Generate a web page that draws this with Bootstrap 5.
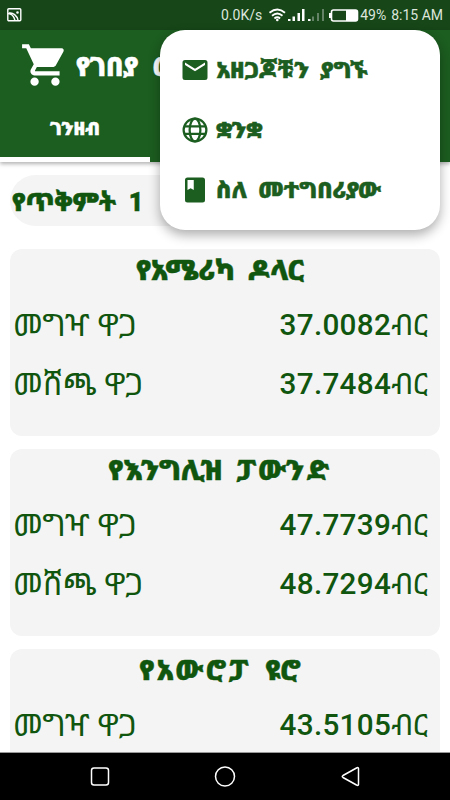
<!DOCTYPE html>
<html lang="am">
<head>
<meta charset="utf-8">
<meta name="viewport" content="width=device-width, initial-scale=1">
<title>የገበያ</title>
<link href="https://cdn.jsdelivr.net/npm/bootstrap@5.3.0/dist/css/bootstrap.min.css" rel="stylesheet">
<style>
:root{--green:#1c5d20;--ink:#10560f}
body{font-family:Roboto,"Noto Sans Ethiopic","Noto Sans","DejaVu Sans",sans-serif;background:#fff;color:var(--ink)}
.screen{width:450px;height:800px}
.status{height:30px;background:#174719;color:#dde5dd;font-size:14px;padding:0 7px;flex:none}
.clock{margin-left:5px}
.app-head{height:132px;background:var(--green);color:#fff;flex:none;box-shadow:0 2px 4px rgba(0,0,0,.3);z-index:1}
.title-bar{height:69px;padding-left:20px}
.heavy{font-weight:900;white-space:pre;line-height:1;-webkit-text-stroke:.5px currentColor}
.app-name{font-size:26px;margin-left:6px;padding-top:5px;word-spacing:8px}
.tab-on{width:150px;height:63px;border-bottom:5px solid #fff;font-size:18.5px;padding-top:3px}
.content{padding:13px 10px 0}
.day{height:51px;border-radius:26px;background:#f4f4f4;font-size:25.2px;padding:4px 0 0 2px;margin-bottom:23px;flex:none}
.rate{height:187px;border-radius:12px;background:#f4f4f4;margin-bottom:13px;flex:none}
.rate h2{font-size:28px;height:43px;margin:0 0 1px;padding-right:10px}
.wide{letter-spacing:2.6px}
.line{height:59px;padding:17px 12px 0 3px;line-height:1;font-size:30px}
.line > span:first-child{font-size:31.2px}
.num b{font-weight:500;letter-spacing:.3px}
.num{font-size:29.7px}
.navkeys{height:48px;background:#000;border-top:1px solid #999;flex:none;z-index:1}
.pop{left:160px;top:30px;width:280px;height:200px;border-radius:25px;background:#fff;box-shadow:0 5px 12px rgba(0,0,0,.32);z-index:2;padding:10px 0 10px 20px}
.pop a{height:60px;color:var(--green);font-size:22.9px;gap:6px}
.pop span{padding-top:3px}
</style>
</head>
<body>
<main class="screen position-relative overflow-hidden d-flex flex-column">
  <div class="status d-flex align-items-center justify-content-between">
    <svg width="15" height="14" viewBox="0 0 15 14" fill="none" stroke="#fff" stroke-width="1.4"><rect x=".8" y=".8" width="13" height="12" rx="1"/><path d="M1 5.500c4 0 6 3 7 7M2 5c4-1 8 3 9 7"/><circle cx="10.500" cy="4.500" r=".6"/></svg>
    <div class="d-flex align-items-center">
      <span>0.0K/s</span>
      <svg width="94" height="16" viewBox="0 0 94 16" class="ms-1" fill="#fff"><g fill="none" stroke="#fff" stroke-width="1.8"><path d="M3.500 5.800q8-6.500 15.500 0M6 8.800q5.300-4.500 10.500 0M8.400 11.500q3-2.400 5.700 0"/></g><circle cx="11.300" cy="13" r="1.300"/><path d="M22 12h2.500v2H22zM26.500 9.500H29V14h-2.500zM31.500 6H34v8h-2.500zM36 2h2.500v12H36zM42 12h2.500v2H42z"/><path fill="#648366" d="M46 9.500h2V14h-2zM51 6h2v8h-2zM56 2h2v12h-2z"/><path d="M63 6h2v5h-2z"/><rect x="65.500" y="3" width="26" height="11" rx="2" fill="none" stroke="#fff" stroke-width="1.600"/><path d="M80 3h11v11H80z"/></svg>
      <span>49%</span><span class="clock">8:15 AM</span>
    </div>
  </div>
  <header class="app-head">
    <div class="title-bar d-flex align-items-center">
      <svg width="50" height="50" viewBox="0 0 24 24" fill="#fff"><path d="M7 18a2 2 0 1 0 0 4 2 2 0 0 0 0-4zM1 2v2h2l3.600 7.590-1.350 2.450C4.520 15.370 5.480 17 7 17h12v-2H7.420a.25.25 0 0 1-.25-.25l.03-.12.900-1.630h7.450c.75 0 1.410-.41 1.750-1.030L20.880 5.480C21.250 4.820 20.770 4 20 4H5.210l-.94-2H1zm16 16a2 2 0 1 0 0 4 2 2 0 0 0 0-4z"/></svg>
      <span class="heavy app-name">የገበያ መረጃ</span>
    </div>
    <div class="tab-on heavy d-flex align-items-center justify-content-center">ገንዘብ</div>
  </header>
  <section class="content d-flex flex-column flex-grow-1 overflow-hidden">
    <div class="day heavy d-flex align-items-center">የጥቅምት  1</div>
    <article class="rate"><h2 class="heavy d-flex align-items-center justify-content-center">የአሜሪካ  ዶላር</h2>
      <div class="line d-flex justify-content-between"><span>መግዣ ዋጋ</span><span class="num"><b>37.0082</b>ብር</span></div>
      <div class="line d-flex justify-content-between"><span>መሸጫ ዋጋ</span><span class="num"><b>37.7484</b>ብር</span></div></article>
    <article class="rate"><h2 class="heavy d-flex align-items-center justify-content-center"><span>የእንግሊዝ  </span><span class="wide">ፓውንድ</span></h2>
      <div class="line d-flex justify-content-between"><span>መግዣ ዋጋ</span><span class="num"><b>47.7739</b>ብር</span></div>
      <div class="line d-flex justify-content-between"><span>መሸጫ ዋጋ</span><span class="num"><b>48.7294</b>ብር</span></div></article>
    <article class="rate"><h2 class="heavy d-flex align-items-center justify-content-center"><span class="wide">የአውሮፓ</span><span>  ዩሮ</span></h2>
      <div class="line d-flex justify-content-between"><span>መግዣ ዋጋ</span><span class="num"><b>43.5105</b>ብር</span></div></article>
  </section>
  <nav class="pop position-absolute">
    <a class="heavy d-flex align-items-center text-decoration-none"><svg width="30" height="30" viewBox="0 0 24 24" fill="currentColor"><path d="M20 4H4a2 2 0 0 0-2 2v12a2 2 0 0 0 2 2h16a2 2 0 0 0 2-2V6a2 2 0 0 0-2-2zm0 4-8 5-8-5V6l8 5 8-5v2z"/></svg><span>አዘጋጆቹን  ያግኙ</span></a>
    <a class="heavy d-flex align-items-center text-decoration-none"><svg width="30" height="30" viewBox="0 0 24 24" fill="none" stroke="currentColor" stroke-width="1.800"><circle cx="12" cy="12" r="9.100"/><ellipse cx="12" cy="12" rx="4.300" ry="9.100"/><path d="M3.500 9h17M3.500 15h17"/></svg><span>ቋንቋ</span></a>
    <a class="heavy d-flex align-items-center text-decoration-none"><svg width="30" height="30" viewBox="0 0 24 24" fill="currentColor"><path d="M18 2H6a2 2 0 0 0-2 2v16a2 2 0 0 0 2 2h12a2 2 0 0 0 2-2V4a2 2 0 0 0-2-2zM6 4h5v8l-2.500-1.500L6 12z"/></svg><span>ስለ  መተግበሪያው</span></a>
  </nav>
  <footer class="navkeys d-flex align-items-center justify-content-center">
    <svg width="300" height="24" viewBox="0 0 300 24" fill="none" stroke="#fff" stroke-width="1.500"><rect x="16.500" y="3" width="17" height="17" rx="2.500"/><circle cx="150" cy="11.500" r="9.500"/><path d="M283.500 3.500v16q0 1.500-2 .5l-13.500-7.500q-1.500-1 0-2l13.500-7.500q2-1 2 .5z"/></svg>
  </footer>
</main>
<script src="https://cdn.jsdelivr.net/npm/bootstrap@5.3.0/dist/js/bootstrap.bundle.min.js"></script>
</body>
</html>
